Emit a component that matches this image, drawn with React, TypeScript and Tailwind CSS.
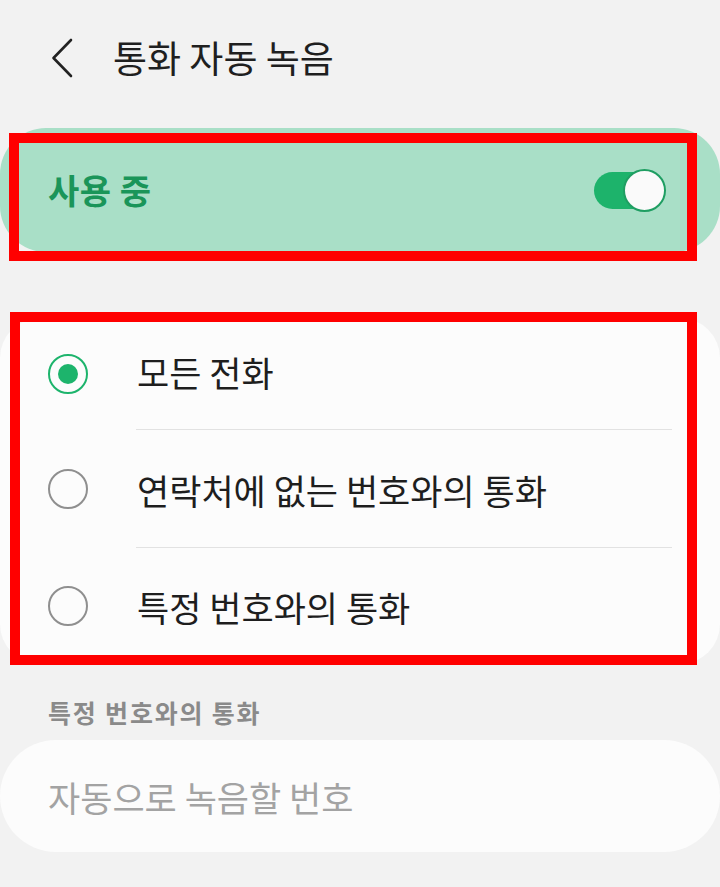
import React from "react";

const font = { fontFamily: '"Noto Sans CJK KR", "Noto Sans", sans-serif' };

function Radio({ checked }: { checked?: boolean }) {
  if (checked) {
    return (
      <div className="w-[40px] h-[40px] rounded-full border-[2.5px] border-[#1db46c] flex items-center justify-center shrink-0">
        <div className="w-[20px] h-[20px] rounded-full bg-[#1db46c]" />
      </div>
    );
  }
  return <div className="w-[40px] h-[40px] rounded-full border-[2px] border-[#8f8f8f] shrink-0" />;
}

function Row({ label, checked, divider, h, textPad }: { label: string; checked?: boolean; divider?: boolean; h: string; textPad?: string }) {
  return (
    <div className={`relative flex items-center pl-[48px] ${h}`}>
      <Radio checked={checked} />
      <span className={`ml-[49px] text-[35px] text-[#1e1e1e] leading-none ${textPad ?? ""}`}>{label}</span>
      {divider && <div className="absolute bottom-0 left-[136px] right-[48px] h-px bg-[#e2e2e2]" />}
    </div>
  );
}

export default function App() {
  return (
    <div className="w-[720px] h-[887px] bg-[#f2f2f2] overflow-hidden" style={font}>
      <div className="h-[116px] flex items-center pl-[50px]">
        <svg width="26" height="42" viewBox="0 0 26 42" className="shrink-0">
          <path d="M21 3 L3.5 21 L21 39" fill="none" stroke="#222" strokeWidth="2.6" strokeLinecap="round" strokeLinejoin="round" />
        </svg>
        <span className="ml-[37px] text-[37px] text-[#1f1f1f] leading-none mb-[2px]">통화 자동 녹음</span>
      </div>

      <div className="relative mt-[12px] h-[124px] bg-[#a9dfc7] rounded-[46px] flex items-center justify-between pl-[48px] pr-[54px]">
        <span className="text-[34px] font-bold text-[#1a9559] leading-none tracking-[0.5px]">사용 중</span>
        <div className="relative w-[72px] h-[44px] flex items-center">
          <div className="absolute left-0 w-[66px] h-[37px] rounded-full bg-[#1db36b]" />
          <div className="absolute right-0 w-[43px] h-[43px] rounded-full bg-[#fafafa] border-[2px] border-[#1f9e62]" />
        </div>
        <div className="absolute top-[5px] left-[9px] right-[23px] bottom-[-9px] border-[10px] border-[#ff0000] pointer-events-none" />
      </div>

      <div className="relative mt-[66px] bg-[#fcfcfc] rounded-[40px]">
        <Row label="모든 전화" checked divider h="h-[112px]" textPad="mb-[6px]" />
        <Row label="연락처에 없는 번호와의 통화" divider h="h-[118px]" />
        <Row label="특정 번호와의 통화" h="h-[116px]" />
        <div className="absolute top-[-6px] left-[10px] right-[23px] bottom-[-1px] border-[10px] border-[#ff0000] pointer-events-none" />
      </div>

      <div className="mt-[32px] h-[32px] flex items-center pl-[48px]">
        <span className="text-[25px] font-semibold text-[#8a8a8a] leading-none tracking-[1.8px]">특정 번호와의 통화</span>
      </div>

      <div className="mt-[12px] h-[112px] bg-[#fcfcfc] rounded-[56px] flex items-center pl-[48px]">
        <span className="text-[35px] text-[#a3a3a3] leading-none">자동으로 녹음할 번호</span>
      </div>
    </div>
  );
}
